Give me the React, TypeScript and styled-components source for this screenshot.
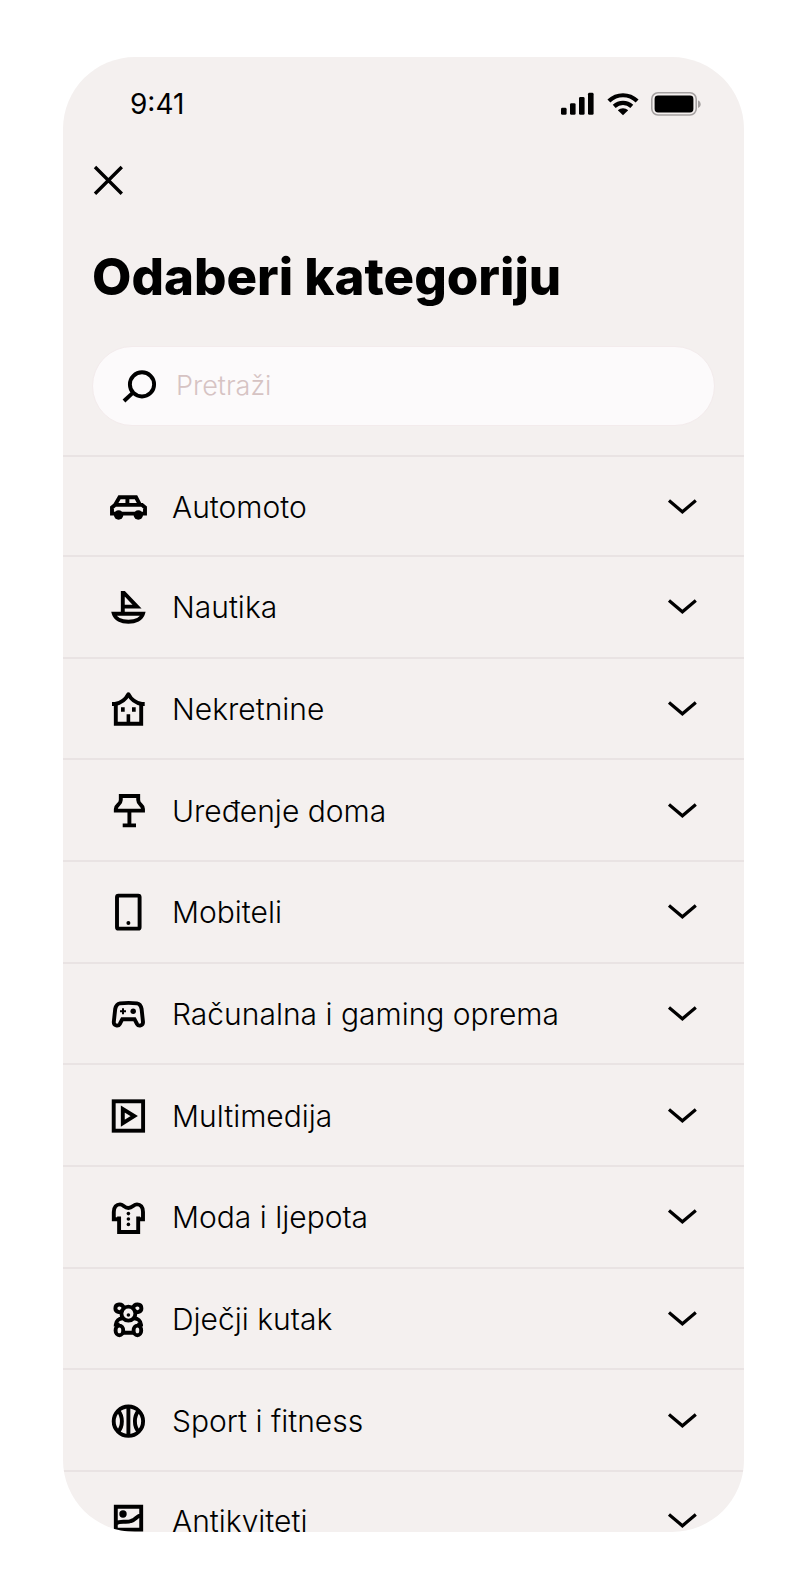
import React from 'react';
import styled, { createGlobalStyle } from 'styled-components';

const GlobalStyle = createGlobalStyle`
  *, *::before, *::after { box-sizing: border-box; }
  body { margin: 0; background: #ffffff; }
  button, input { font: inherit; color: inherit; }
`;

const ink = '#000000';
const line = '#e9e3e3';

const Page = styled.div`
  display: flex;
  height: 100vh;
  padding: 57px 60px 55px 63px;
  font-family: Inter, 'Liberation Sans', sans-serif;
  color: ${ink};
`;

const Screen = styled.main`
  display: flex;
  flex: 1;
  flex-direction: column;
  min-width: 0;
  overflow: hidden;
  background: #f4f0ef;
  border-radius: 72px;
`;

const StatusBar = styled.div`
  display: flex;
  flex: none;
  align-items: center;
  justify-content: space-between;
  height: 92px;
  padding: 1px 43px 0 67px;
`;

const Clock = styled.time`
  font-size: 28px;
  line-height: 36px;
`;

const Indicators = styled.div`
  display: flex;
  align-items: center;
  gap: 12px;
`;

const Header = styled.header`
  display: flex;
  flex: none;
  flex-direction: column;
  align-items: flex-start;
  padding: 16px 29px 29px;
`;

const CloseButton = styled.button`
  display: flex;
  padding: 0;
  border: 0;
  background: none;
  cursor: pointer;
`;

const Title = styled.h1`
  margin: 48px 0 37px;
  font-size: 51px;
  font-weight: 800;
  line-height: 64px;
  white-space: nowrap;
`;

const SearchField = styled.label`
  display: flex;
  align-items: center;
  gap: 18px;
  width: 100%;
  height: 80px;
  padding: 0 29px;
  border: 1px solid #f3ebec;
  border-radius: 40px;
  background: #fcfafb;
`;

const SearchInput = styled.input`
  flex: 1;
  min-width: 0;
  padding: 0;
  border: 0;
  outline: 0;
  background: none;
  font-size: 27px;
  font-weight: 300;
  line-height: 36px;
  &::placeholder { color: #d6c3c3; opacity: 1; }
`;

const CategoryList = styled.ul`
  display: grid;
  flex: 1;
  grid-template-rows: 100px repeat(9, minmax(100px, 1fr)) 60px;
  margin: 0;
  padding: 0;
  border-top: 2px solid ${line};
  list-style: none;
`;

const CategoryItem = styled.li`
  border-bottom: 2px solid ${line};
  &:last-child { border-bottom: 0; }
`;

const CategoryButton = styled.button`
  display: flex;
  align-items: center;
  gap: 24px;
  width: 100%;
  height: 100%;
  min-height: 98px;
  padding: 1px 46px 0 45px;
  border: 0;
  background: none;
  text-align: left;
  cursor: pointer;
`;

const CategoryName = styled.span`
  flex: 1;
  font-size: 30px;
  font-weight: 300;
  line-height: 40px;
`;

const Glyph = styled.svg`
  display: block;
  flex: none;
  fill: none;
  stroke: ${ink};
  stroke-width: 3.9;
`;

const Solid = styled.g`
  fill: ${ink};
  stroke: none;
`;

const categories: { name: string; art: React.ReactNode }[] = [
  {
    name: 'Automoto',
    art: (
      <>
        <path d="M4 26.6V20.5L7 17.9 11.5 10.3H28L32 17.9H34L37 20.5V26.6ZM7 17.9H33M19.4 10V18" />
        <Solid>
          <circle cx="10.6" cy="28" r="4.7" />
          <circle cx="30.3" cy="28" r="4.7" />
        </Solid>
      </>
    ),
  },
  {
    name: 'Nautika',
    art: <path d="M14.8 27V6H16L29 19.6H14.8M5.8 26.8H35C33.5 32 27.5 34.7 20.4 34.7S7.3 32 5.8 26.8Z" />,
  },
  {
    name: 'Nekretnine',
    art: (
      <>
        <path strokeLinejoin="round" d="M4 15H7C13 14 18 10 20.4 5.2 22.8 10 28 14 33.8 15H36.7" />
        <path d="M7.8 15V34.8H33.2V15" />
        <Solid>
          <path d="M13 18.3H16.7V22.7H13ZM24 18.3H27.7V22.7H24ZM18.6 25.3H22.2V35H18.6Z" />
        </Solid>
      </>
    ),
  },
  {
    name: 'Uređenje doma',
    art: <path d="M12.8 5H30.2V9C30.2 14 35 13.5 35 18V19.6H7.8V18C7.8 13.5 12.8 14 12.8 9ZM21.4 20V34.4M14.7 34.4H28" />,
  },
  {
    name: 'Mobiteli',
    art: (
      <>
        <rect x="9" y="3.6" width="22.6" height="33" rx="1.4" />
        <Solid>
          <circle cx="20.4" cy="31" r="2" />
        </Solid>
      </>
    ),
  },
  {
    name: 'Računalna i gaming oprema',
    art: (
      <>
        <path d="M12 9.4C17 8.8 24 8.8 29 9.4 32 9.8 33 12 33.6 15L35 28C35.2 32 30.5 32.6 29 30L26.5 25.2H14.3L11.8 30C10.3 32.6 5.6 32 5.8 28L7.2 15C7.8 12 9 9.8 12 9.4Z" />
        <path strokeWidth="2" d="M15 14.3V20.3M12 17.3H18" />
        <Solid>
          <circle cx="25.2" cy="17.2" r="2.7" />
        </Solid>
      </>
    ),
  },
  {
    name: 'Multimedija',
    art: (
      <>
        <rect x="5.7" y="5.3" width="29.4" height="29.4" />
        <path d="M14.8 13V27.2L26.2 20.1Z" />
      </>
    ),
  },
  {
    name: 'Moda i ljepota',
    art: (
      <>
        <path d="M11.1 19.5V22.3H5.8V15C5.8 10 8.5 7.4 12 7.4 15.5 7.4 16 11 20.4 11S25.3 7.4 29 7.4C32.5 7.4 35 10 35 15V22.3H30.2V19.5M11.1 20V35H30.2V20" />
        <Solid>
          <circle cx="20.4" cy="16.6" r="1.8" />
          <circle cx="20.4" cy="22" r="1.8" />
          <circle cx="20.4" cy="27.4" r="1.8" />
        </Solid>
      </>
    ),
  },
  {
    name: 'Dječji kutak',
    art: (
      <>
        <circle cx="20.4" cy="14.6" r="7" />
        <path d="M14.4 11.5C12.5 14.5 7.3 13 7.4 9.3 7.5 4.6 14.4 4.2 15.7 8.8M26.4 11.5C28.3 14.5 33.5 13 33.4 9.3 33.3 4.6 26.4 4.2 25.1 8.8" />
        <path d="M14.5 19.2C11 19.5 8 21.8 7.8 25.6H11.5M26.3 19.2C29.8 19.5 32.8 21.8 33 25.6H29.3M14 33.8H26.8" />
        <ellipse cx="11.4" cy="31.4" rx="3.8" ry="4.8" />
        <ellipse cx="29.4" cy="31.4" rx="3.8" ry="4.8" />
        <Solid>
          <circle cx="20.4" cy="16" r="1.8" />
        </Solid>
      </>
    ),
  },
  {
    name: 'Sport i fitness',
    art: (
      <>
        <circle cx="20.4" cy="20.2" r="14.7" />
        <path d="M20.4 6V34M10.5 10C15 15.5 15 25 10.5 30.4M30.3 10C25.8 15.5 25.8 25 30.3 30.4" />
      </>
    ),
  },
  {
    name: 'Antikviteti',
    art: (
      <>
        <path d="M7.8 5.8H33.2V28.6H7.8ZM8 22.4C13 19 18 22 23 20 28 18.6 28 15.5 33 14" />
        <Solid>
          <circle cx="15" cy="13" r="3.7" />
        </Solid>
      </>
    ),
  },
];

function SignalIcon() {
  return (
    <Glyph width="34" height="24" viewBox="0 0 34 24" aria-hidden="true">
      <Solid>
        <rect x="0" y="15.8" width="5.6" height="7" rx="1.4" />
        <rect x="9" y="11.2" width="5.6" height="11.6" rx="1.4" />
        <rect x="18" y="5" width="5.6" height="17.8" rx="1.4" />
        <rect x="27" y="0.8" width="5.6" height="22" rx="1.4" />
      </Solid>
    </Glyph>
  );
}

function WifiIcon() {
  return (
    <Glyph width="32" height="24" viewBox="0 0 32 24" aria-hidden="true">
      <path strokeWidth="4.2" d="M1.9 9.1C10 1.3 22 1.3 30.1 9.1M7.2 14.4C12.2 9.7 19.8 9.7 24.8 14.4" />
      <Solid>
        <path d="M10.8 18.3C13.8 15.6 18.2 15.6 21.2 18.3L16 23.2Z" />
      </Solid>
    </Glyph>
  );
}

function BatteryIcon() {
  return (
    <Glyph width="50" height="24" viewBox="0 0 50 24" aria-hidden="true">
      <rect x="0.8" y="0.8" width="44.4" height="22.2" rx="6.2" strokeWidth="1.6" stroke="#a5a1a1" />
      <Solid>
        <rect x="3.6" y="3.6" width="38.8" height="16.8" rx="3.4" />
        <path fill="#a5a1a1" d="M47 8.6C50.6 9.8 50.6 14.8 47 16Z" />
      </Solid>
    </Glyph>
  );
}

export default function App() {
  return (
    <>
      <GlobalStyle />
      <Page>
        <Screen>
          <StatusBar>
            <Clock>9:41</Clock>
            <Indicators>
              <SignalIcon />
              <WifiIcon />
              <BatteryIcon />
            </Indicators>
          </StatusBar>
          <Header>
            <CloseButton type="button" aria-label="Zatvori">
              <Glyph width="32" height="32" viewBox="0 0 32 32" aria-hidden="true">
                <path strokeWidth="3.4" d="M3 2L29.8 28.8M29.8 2L3 28.8" />
              </Glyph>
            </CloseButton>
            <Title>Odaberi kategoriju</Title>
            <SearchField>
              <Glyph width="36" height="36" viewBox="0 0 36 36" aria-hidden="true">
                <circle cx="20" cy="16.4" r="12.1" strokeWidth="3.9" />
                <path strokeWidth="4" d="M11.3 24.4L2 33" />
              </Glyph>
              <SearchInput type="text" placeholder="Pretraži" aria-label="Pretraži" />
            </SearchField>
          </Header>
          <CategoryList>
            {categories.map(({ name, art }) => (
              <CategoryItem key={name}>
                <CategoryButton type="button" aria-expanded={false}>
                  <Glyph width="40" height="40" viewBox="0 0 40 40" aria-hidden="true">
                    {art}
                  </Glyph>
                  <CategoryName>{name}</CategoryName>
                  <Glyph width="32" height="32" viewBox="0 0 32 32" aria-hidden="true">
                    <path strokeWidth="3.2" d="M3 9.6L16.4 20.8 29.8 9.6" />
                  </Glyph>
                </CategoryButton>
              </CategoryItem>
            ))}
          </CategoryList>
        </Screen>
      </Page>
    </>
  );
}
